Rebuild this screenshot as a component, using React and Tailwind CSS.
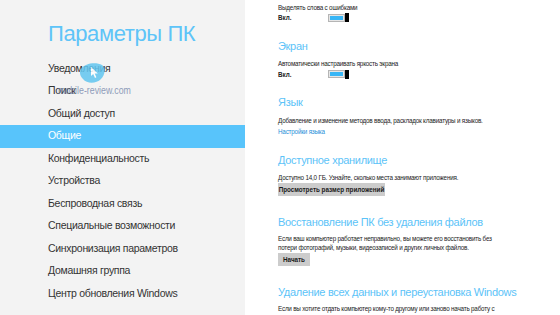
const menu = [
  "Уведомления",
  "Поиск",
  "Общий доступ",
  "Общие",
  "Конфиденциальность",
  "Устройства",
  "Беспроводная связь",
  "Специальные возможности",
  "Синхронизация параметров",
  "Домашняя группа",
  "Центр обновления Windows",
];

function Toggle() {
  return (
    <div className="flex items-center w-[21px] h-[9px]">
      <div className="flex-1 h-[8px] border border-[#b5b5b5] bg-[#e6e6e6] p-[1px]">
        <div className="w-full h-full bg-[#38b6f6]" />
      </div>
      <div className="w-[4px] h-[9px] bg-black" />
    </div>
  );
}

function Heading({ children, className = "" }) {
  return (
    <h3 className={"text-[11px] leading-[18px] tracking-[-0.3px] text-[#5cc3f8] whitespace-nowrap " + className}>
      {children}
    </h3>
  );
}

function Small({ children, className = "" }) {
  return (
    <p className={"text-[6.3px] leading-[9px] tracking-[-0.2px] text-[#222] whitespace-nowrap " + className}>
      {children}
    </p>
  );
}

function Button({ children, className = "" }) {
  return (
    <div className={"bg-[#cccccc] flex items-center justify-center text-[6.3px] font-bold text-[#1a1a1a] whitespace-nowrap " + className}>
      {children}
    </div>
  );
}

export default function App() {
  return (
    <div
      className="relative w-[560px] h-[315px] flex overflow-hidden bg-white"
      style={{ fontFamily: '"Liberation Sans", Arial, sans-serif' }}
    >
      <aside className="w-[245px] shrink-0 bg-[#f3f3f3] pt-[20px]">
        <h1 className="pl-[48px] text-[22px] leading-[28px] tracking-[-0.4px] text-[#5ec4f8] whitespace-nowrap">
          Параметры ПК
        </h1>
        <ul className="mt-[9.5px]">
          {menu.map((item) => (
            <li
              key={item}
              className={
                "h-[22.5px] flex items-center pl-[48px] text-[10.5px] tracking-[-0.3px] whitespace-nowrap " +
                (item === "Общие" ? "bg-[#58c4fb] text-white" : "text-[#333]")
              }
            >
              {item}
            </li>
          ))}
        </ul>
      </aside>

      <main className="flex-1 pl-[33px] pt-[3px] flex flex-col items-start">
        <Small>Выделять слова с ошибками</Small>
        <div className="mt-[1px] h-[9px] flex items-center">
          <span className="w-[50px] text-[6.3px] font-bold text-[#222]">Вкл.</span>
          <Toggle />
        </div>

        <Heading className="mt-[15.2px]">Экран</Heading>
        <Small className="mt-[3.8px]">Автоматически настраивать яркость экрана</Small>
        <div className="mt-[2px] h-[9px] flex items-center">
          <span className="w-[50px] text-[6.3px] font-bold text-[#222]">Вкл.</span>
          <Toggle />
        </div>

        <Heading className="mt-[14.2px]">Язык</Heading>
        <Small className="mt-[4.8px]">Добавление и изменение методов ввода, раскладок клавиатуры и языков.</Small>
        <p className="mt-[2px] text-[6.3px] leading-[9px] tracking-[-0.2px] text-[#1f8fd9] whitespace-nowrap">
          Настройки языка
        </p>

        <Heading className="mt-[15.4px]">Доступное хранилище</Heading>
        <Small className="mt-[3.6px]">Доступно 14,0 ГБ. Узнайте, сколько места занимают приложения.</Small>
        <Button className="mt-[1px] w-[107px] h-[13.5px]">Просмотреть размер приложений</Button>

        <Heading className="mt-[16.2px]">Восстановление ПК без удаления файлов</Heading>
        <Small className="mt-[3.3px]">Если ваш компьютер работает неправильно, вы можете его восстановить без</Small>
        <Small>потери фотографий, музыки, видеозаписей и других личных файлов.</Small>
        <Button className="mt-[1px] w-[32px] h-[13px]">Начать</Button>

        <Heading className="mt-[17.2px]">Удаление всех данных и переустановка Windows</Heading>
        <Small className="mt-[2.8px]">Если вы хотите отдать компьютер кому-то другому или заново начать работу с</Small>
      </main>

      {/* watermark */}
      <div className="absolute left-[79px] top-[62px] opacity-85 pointer-events-none">
        <svg width="27" height="22" viewBox="0 0 27 22">
          <path d="M2 7 C6 1 17 0 23 3 C27 6 26 13 22 17 C17 22 8 22 4 17 C1 14 0 10 2 7 Z" fill="#62c6f0" />
          <path d="M12 5 L12 14 L14.2 12 L16 16 L17.4 15.3 L15.7 11.6 L18.8 11.4 Z" fill="#fff" />
        </svg>
      </div>
      <div className="absolute left-[58px] top-[83px] origin-left scale-x-[0.8] text-[11px] leading-[14px] text-[#6c7ea6] opacity-75 pointer-events-none whitespace-nowrap">
        mobile-review.com
      </div>
    </div>
  );
}
